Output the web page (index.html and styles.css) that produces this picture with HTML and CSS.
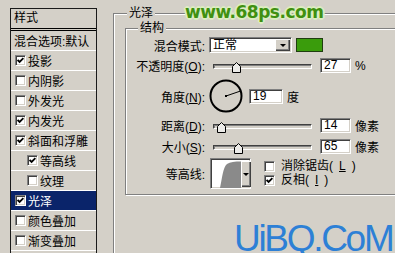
FILE: index.html
```html
<!DOCTYPE html>
<html>
<head>
<meta charset="utf-8">
<link rel="stylesheet" href="styles.css">
</head>
<body>
<div class="dialog">
  <div class="styles-list">
    <div class="list-head">样式</div>
    <div class="item plain">混合选项:默认</div>
    <div class="item"><span class="cb"><svg width="7" height="7" viewBox="0 0 7 7"><polyline points="0.6,3 2.6,5 6.4,1.2" fill="none" stroke="#000" stroke-width="1.8"/></svg></span>投影</div>
    <div class="item"><span class="cb"></span>内阴影</div>
    <div class="item"><span class="cb"></span>外发光</div>
    <div class="item"><span class="cb"><svg width="7" height="7" viewBox="0 0 7 7"><polyline points="0.6,3 2.6,5 6.4,1.2" fill="none" stroke="#000" stroke-width="1.8"/></svg></span>内发光</div>
    <div class="item"><span class="cb"><svg width="7" height="7" viewBox="0 0 7 7"><polyline points="0.6,3 2.6,5 6.4,1.2" fill="none" stroke="#000" stroke-width="1.8"/></svg></span>斜面和浮雕</div>
    <div class="item sub"><span class="cb"><svg width="7" height="7" viewBox="0 0 7 7"><polyline points="0.6,3 2.6,5 6.4,1.2" fill="none" stroke="#000" stroke-width="1.8"/></svg></span>等高线</div>
    <div class="item sub"><span class="cb"></span>纹理</div>
    <div class="item sel"><span class="cb"><svg width="7" height="7" viewBox="0 0 7 7"><polyline points="0.6,3 2.6,5 6.4,1.2" fill="none" stroke="#000" stroke-width="1.8"/></svg></span>光泽</div>
    <div class="item"><span class="cb"></span>颜色叠加</div>
    <div class="item"><span class="cb"></span>渐变叠加</div>
    <div class="item"></div>
  </div>

  <div class="group outer">
    <div class="legend outer-legend">光泽</div>
    <div class="group inner">
      <div class="legend inner-legend">结构</div>
      <div class="rows">
        <div class="row r1">
          <span class="lbl">混合模式:</span>
          <div class="select sunken"><span class="sel-text">正常</span><span class="drop"><i class="tri"></i></span></div>
          <span class="swatch"></span>
        </div>
        <div class="row r2">
          <span class="lbl">不透明度(<u>O</u>):</span>
          <div class="slider"><div class="track"></div><svg class="thumb" style="left:23px" width="9" height="11" viewBox="0 0 9 11"><polygon points="0.5,10.5 0.5,4.5 4.5,0.5 8.5,4.5 8.5,10.5" fill="#ecebe8" stroke="#000" stroke-width="1"/></svg></div>
          <span class="num sunken">27</span>
          <span class="unit">%</span>
        </div>
        <div class="row r3">
          <span class="lbl">角度(<u>N</u>):</span>
          <svg class="dial" width="34" height="34" viewBox="0 0 34 34"><circle cx="17" cy="17" r="15.5" fill="none" stroke="#000" stroke-width="2"/><line x1="17" y1="17" x2="31" y2="12.2" stroke="#000" stroke-width="1"/><rect x="16" y="16" width="2" height="2" fill="#000"/></svg>
          <span class="num sunken wide">19</span>
          <span class="unit">度</span>
        </div>
        <div class="row r4">
          <span class="lbl">距离(<u>D</u>):</span>
          <div class="slider"><div class="track"></div><svg class="thumb" style="left:8px" width="9" height="11" viewBox="0 0 9 11"><polygon points="0.5,10.5 0.5,4.5 4.5,0.5 8.5,4.5 8.5,10.5" fill="#ecebe8" stroke="#000" stroke-width="1"/></svg></div>
          <span class="num sunken">14</span>
          <span class="unit">像素</span>
        </div>
        <div class="row r5">
          <span class="lbl">大小(<u>S</u>):</span>
          <div class="slider"><div class="track"></div><svg class="thumb" style="left:25px" width="9" height="11" viewBox="0 0 9 11"><polygon points="0.5,10.5 0.5,4.5 4.5,0.5 8.5,4.5 8.5,10.5" fill="#ecebe8" stroke="#000" stroke-width="1"/></svg></div>
          <span class="num sunken">65</span>
          <span class="unit">像素</span>
        </div>
        <div class="row r6">
          <span class="lbl">等高线:</span>
          <div class="contour sunken">
            <svg class="curve" width="28" height="27" viewBox="0 0 28 27"><path d="M7,27 C9,18 10,6 14,3 C17,1 22,0.5 28,0.5 L28,27 Z" fill="#8a8a8a"/></svg>
            <span class="drop tall"><i class="tri"></i></span>
          </div>
          <div class="opts">
            <div class="opt"><span class="cb"></span>消除锯齿(<u>L</u>)</div>
            <div class="opt"><span class="cb"><svg width="7" height="7" viewBox="0 0 7 7"><polyline points="0.6,3 2.6,5 6.4,1.2" fill="none" stroke="#000" stroke-width="1.8"/></svg></span>反相(<u>I</u>)</div>
          </div>
        </div>
      </div>
    </div>
  </div>
</div>
<div class="wm-top">www.68ps.com</div>
<div class="wm-bot">UiBQ.CoM</div>
</body>
</html>
```
FILE: styles.css
```css
* { box-sizing: border-box; }
html, body {
  margin: 0;
  width: 395px;
  height: 253px;
  overflow: hidden;
}
body {
  position: relative;
  background: #d4d0c8;
  color: #000;
  font-family: "Liberation Sans", "Noto Sans CJK SC", sans-serif;
  font-size: 12px;
}
u { text-decoration: underline; text-underline-offset: 1px; }

.dialog {
  display: flex;
  align-items: flex-start;
  padding: 8px 0 0 10px;
  gap: 16px;
}

/* left style list */
.styles-list {
  flex: none;
  width: 87px;
  height: 250px;
  border: 1px solid #1a1a1a;
  overflow: hidden;
}
.list-head {
  height: 22px;
  line-height: 19px;
  padding-left: 3px;
  border-bottom: 3px double #000;
}
.item {
  height: 20px;
  display: flex;
  align-items: center;
  gap: 2px;
  padding-left: 4px;
  border-bottom: 1px solid #fff;
  white-space: nowrap;
}
.item.plain { padding-left: 3px; }
.item.sub { padding-left: 16px; }
.item.sel { background: #0a246a; color: #fff; }

.cb {
  flex: none;
  width: 11px;
  height: 11px;
  background: #fff;
  border: 1px solid;
  border-color: #808080 #fff #fff #808080;
  box-shadow: inset 1px 1px 0 #404040, inset -1px -1px 0 #d4d0c8;
  display: flex;
}
.cb svg { margin: 1px 0 0 1px; }

/* group boxes */
.group {
  border: 1px solid #808080;
  box-shadow: inset 1px 1px 0 #fff, 1px 1px 0 #fff;
}
.legend {
  width: fit-content;
  margin-top: -8px;
  padding: 0 2px;
  line-height: 14px;
  background: #d4d0c8;
}
.outer {
  flex: none;
  width: 300px;
  height: 250px;
  margin-top: 5px;
}
.outer-legend { margin-left: 13px; }
.inner {
  width: 285px;
  margin: 8px 0 0 11px;
}
.inner-legend { margin-left: 12px; }

.rows {
  display: flex;
  flex-direction: column;
  padding: 1px 0 5px 0;
}
.row { display: flex; align-items: center; }
.r1 { height: 18px; }
.r2 { height: 19px; margin-top: 2px; }
.r3 { height: 34px; margin-top: 4px; }
.r4 { height: 19px; margin-top: 3px; }
.r5 { height: 19px; margin-top: 2px; }
.r6 { height: 31px; margin-top: 2px; }

.lbl {
  flex: none;
  width: 79px;
  margin-right: 4px;
  text-align: right;
  white-space: nowrap;
}

.sunken {
  background: #fff;
  border: 1px solid;
  border-color: #808080 #fff #fff #808080;
  box-shadow: inset 1px 1px 0 #404040, inset -1px -1px 0 #d4d0c8;
}

.select {
  flex: none;
  width: 83px;
  height: 16px;
  display: flex;
  align-items: center;
  justify-content: space-between;
}
.sel-text { padding-left: 3px; line-height: 14px; }
.drop {
  flex: none;
  width: 15px;
  height: 12px;
  margin-right: 1px;
  background: #d4d0c8;
  box-shadow: inset 1px 1px 0 #fff, inset -1px -1px 0 #404040, inset -2px -2px 0 #808080;
  display: flex;
  align-items: center;
  justify-content: center;
}
.tri {
  width: 0;
  height: 0;
  border-left: 3px solid transparent;
  border-right: 3px solid transparent;
  border-top: 3px solid #000;
}
.swatch {
  flex: none;
  width: 27px;
  height: 14px;
  margin-left: 4px;
  background: #3a9c0c;
  border: 1px solid #1f3d10;
}

.slider {
  flex: none;
  position: relative;
  width: 107px;
  height: 12px;
  margin-right: 4px;
}
.track {
  margin: 4px 4px 0 4px;
  height: 5px;
  background: #d4d0c8;
  border: 1px solid;
  border-color: #404040 #fff #fff #404040;
  box-shadow: inset 1px 1px 0 #808080;
}
.thumb { position: absolute; top: 2px; }

.num {
  flex: none;
  width: 31px;
  height: 15px;
  padding-left: 3px;
  font-size: 12px;
  line-height: 13px;
}
.num.wide { width: 34px; }
.unit { margin-left: 4px; white-space: nowrap; }

.dial { flex: none; margin-right: 6px; }

.contour {
  flex: none;
  width: 41px;
  height: 31px;
  margin-left: 1px;
  display: flex;
  align-items: stretch;
  padding: 2px 1px 1px 2px;
}
.curve { flex: none; }
.drop.tall { height: auto; width: 10px; margin: 0; }

.opts {
  display: flex;
  flex-direction: column;
  gap: 3px;
  margin-left: 13px;
}
.opt {
  display: flex;
  align-items: center;
  gap: 6px;
  height: 11px;
  line-height: 11px;
  white-space: nowrap;
}

/* watermarks */
.wm-top {
  position: absolute;
  left: 185px;
  top: 2px;
  font-family: "DejaVu Sans", sans-serif;
  font-weight: bold;
  font-size: 17px;
  letter-spacing: -0.5px;
  line-height: 20px;
  color: #3f9010;
  text-shadow: 1px 0 #dcecc0, -1px 0 #dcecc0, 0 1px #dcecc0, 0 -1px #dcecc0,
    1px 1px #dcecc0, -1px -1px #dcecc0, 1px -1px #dcecc0, -1px 1px #dcecc0,
    2px 0 #dcecc0, -2px 0 #dcecc0, 0 2px #dcecc0, 0 -2px #dcecc0;
}
.wm-bot {
  position: absolute;
  left: 234px;
  top: 219px;
  font-family: "Liberation Sans", Arial, sans-serif;
  font-size: 37px;
  letter-spacing: -2.3px;
  line-height: 40px;
  color: #2d80d6;
}
```
